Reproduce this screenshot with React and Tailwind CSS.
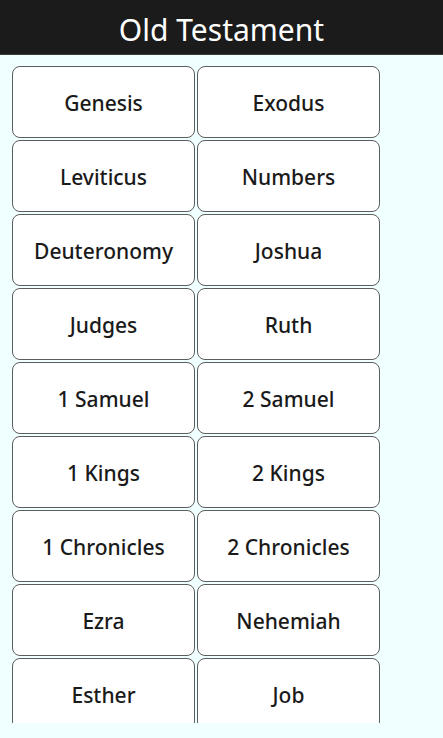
import React from "react";

const books = [
  "Genesis", "Exodus", "Leviticus", "Numbers", "Deuteronomy", "Joshua",
  "Judges", "Ruth", "1 Samuel", "2 Samuel", "1 Kings", "2 Kings",
  "1 Chronicles", "2 Chronicles", "Ezra", "Nehemiah", "Esther", "Job",
];

export default function App() {
  return (
    <div className="w-[443px] h-[738px] bg-[#f0ffff] flex flex-col" style={{ fontFamily: '"Noto Sans", "Open Sans", sans-serif' }}>
      <div className="h-[55px] bg-[#1b1b1b] border-b border-[#3a3a3a] flex items-center justify-center shrink-0">
        <span className="text-white text-[30px] leading-none pt-[5px]">Old Testament</span>
      </div>
      <div className="h-[668px] overflow-hidden pl-[12px] pt-[11px]">
        <div className="grid grid-cols-[183px_183px] gap-[2px]">
          {books.map((b) => (
            <button key={b} className="h-[72px] bg-white border-[1.5px] border-[#5c5c5c] rounded-[8px] flex items-center justify-center text-[21px] font-medium text-[#1a1a1a] pt-[3px]">
              {b}
            </button>
          ))}
        </div>
      </div>
    </div>
  );
}
